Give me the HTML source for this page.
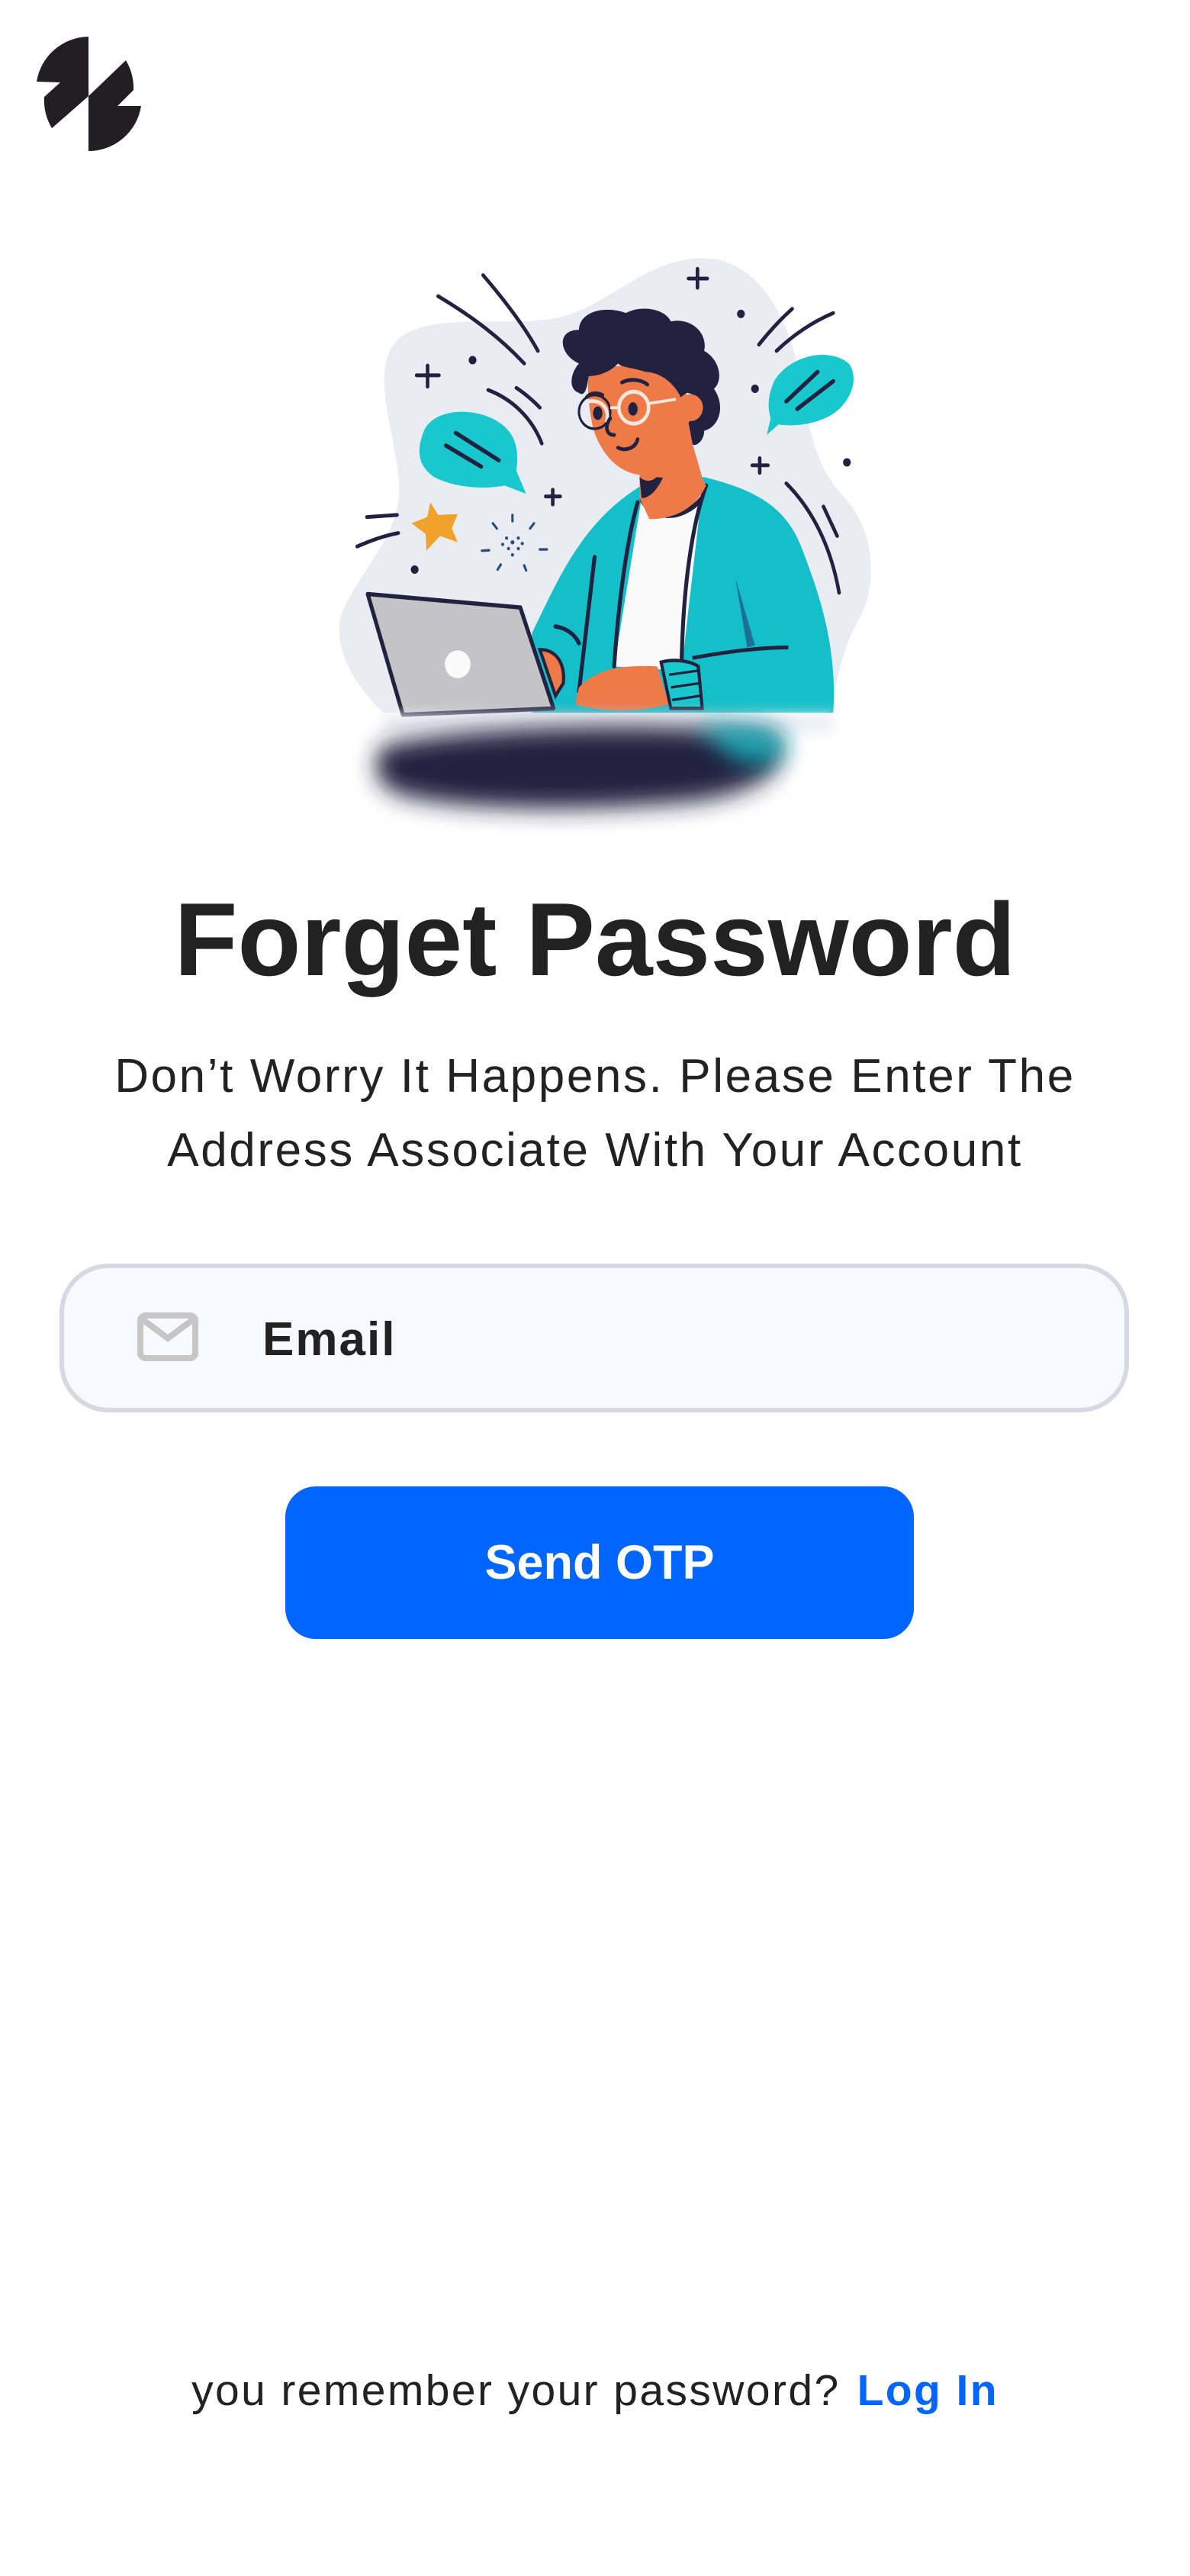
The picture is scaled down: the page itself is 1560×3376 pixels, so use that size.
<!DOCTYPE html>
<html><head><meta charset="utf-8">
<style>
html,body{margin:0;padding:0;background:#fff;}
body{width:1560px;height:3376px;position:relative;overflow:hidden;font-family:"Liberation Sans",sans-serif;color:#222;}
.abs{position:absolute;}
h1{position:absolute;left:0;width:1560px;top:1156px;margin:0;text-align:center;font-size:136px;font-weight:bold;line-height:150px;letter-spacing:0px;color:#222;}
.sub{left:0;width:1560px;top:1362px;text-align:center;font-size:62px;line-height:97px;color:#222;letter-spacing:2.6px;}
.input{left:78px;top:1656px;width:1390px;height:183px;border:6px solid #d6d9e4;border-radius:64px;background:#f6f9fe;}
.email{left:344px;top:1718px;font-size:62px;font-weight:bold;line-height:76px;color:#222;letter-spacing:2px;}
.btn{left:374px;top:1948px;width:824px;height:200px;border-radius:40px;background:#0066ff;color:#fff;font-size:63px;font-weight:bold;text-align:center;line-height:200px;}
.foot{left:0;width:1560px;top:3098px;text-align:center;font-size:57px;line-height:70px;color:#222;letter-spacing:2.4px;}
.foot span{color:#0066ff;font-weight:bold;margin-left:22px;}
</style></head><body>

<svg class="abs" style="left:0;top:0" width="260" height="240" viewBox="0 0 260 240">
<path d="M48,107 A70,70 0 0 1 116,48 L116,126 L68,168 A72,72 0 0 1 58,127 L79,108 Z" fill="#221f24"/>
<path d="M165,79 A72,72 0 0 1 175,118 L154,139 L185,139 A70,70 0 0 1 116,198 L116,126 Z" fill="#221f24"/>
</svg>

<svg class="abs" style="left:400px;top:300px" width="800" height="860" viewBox="0 0 1560 1560" preserveAspectRatio="none">
<defs>
<filter id="bl" x="-30%" y="-50%" width="160%" height="200%"><feGaussianBlur stdDeviation="28"/></filter>
<filter id="bl2" x="-20%" y="-50%" width="140%" height="200%"><feGaussianBlur stdDeviation="14"/></filter>
</defs>
<path d="M240,260 C320,200 500,230 620,215 C760,200 850,80 1000,70 C1150,60 1230,200 1260,330 C1290,480 1300,560 1380,640 C1460,720 1460,850 1420,920 C1370,1000 1360,1080 1340,1150 L200,1150 C120,1080 60,980 100,900 C150,800 250,720 240,600 C230,480 160,330 240,260 Z" fill="#e9ecf3"/>
<path d="M580,960 C640,850 700,700 860,610 L1020,590 C1150,620 1230,660 1270,760 C1320,880 1360,1000 1350,1150 L580,1150 Z" fill="#14bfc9"/>
<path d="M1100,830 L1150,990 L1130,995 Z" fill="#1d6f96"/>
<path d="M860,640 L1015,620 L962,1050 L790,1040 Z" fill="#fafafa"/>
<path d="M860,640 C880,690 960,700 1015,640" stroke="#22213f" stroke-width="12" fill="none"/>
<path d="M850,650 C820,750 800,900 790,1040 M1025,610 C990,700 965,850 962,1050 M740,780 L700,1100 M640,945 C670,950 690,965 700,985" stroke="#22213f" stroke-width="10" fill="none" stroke-linecap="round"/>
<path d="M855,580 L1010,585 L1025,610 C1000,660 950,690 880,690 L855,640 Z" fill="#ee7a48"/>
<path d="M855,590 C880,610 910,600 940,520 C920,600 890,640 860,640 Z" fill="#22213f"/>
<path d="M725,350 C760,320 880,310 960,360 C990,420 1000,470 990,510 L1015,590 C960,600 900,590 860,585 C790,580 750,520 735,470 C725,420 720,380 725,350 Z" fill="#ee7a48"/>
<path d="M700,320 C650,300 640,240 700,240 C700,200 760,180 820,200 C860,180 920,190 935,220 C990,210 1030,250 1020,290 C1060,310 1070,360 1045,380 C1075,420 1060,470 1020,480 C1020,510 990,520 990,510 L980,460 C1010,440 1010,390 975,390 L960,400 C940,360 900,340 870,340 C840,330 810,330 800,320 C780,340 750,350 725,350 C720,380 715,400 700,390 C670,380 680,340 700,320 Z" fill="#22213f"/>
<circle cx="985" cy="425" r="32" fill="#ee7a48"/>
<circle cx="740" cy="435" r="40" fill="none" stroke="#22213f" stroke-width="6"/>
<circle cx="840" cy="425" r="38" fill="none" stroke="#f3e6dc" stroke-width="9"/>
<path d="M725,410 C760,405 780,430 770,460" fill="none" stroke="#f3e6dc" stroke-width="9"/>
<path d="M780,425 L800,425 M878,415 L948,405" stroke="#f3e6dc" stroke-width="7"/>
<ellipse cx="748" cy="438" rx="12" ry="16" fill="#22213f"/><ellipse cx="838" cy="428" rx="12" ry="16" fill="#22213f"/>
<path d="M780,450 C765,470 770,490 790,490 M800,520 C820,530 845,520 850,500 M720,400 C730,390 745,388 760,395 M810,365 C830,355 860,358 875,370" stroke="#22213f" stroke-width="9" fill="none" stroke-linecap="round"/>
<path d="M300,490 C320,420 450,420 510,470 C545,500 545,540 540,575 L565,630 L510,610 C460,620 380,615 330,590 C290,565 285,530 300,490 Z" fill="#19c8cc"/>
<path d="M385,485 L495,550 M360,515 L450,565" stroke="#22213f" stroke-width="10" stroke-linecap="round"/>
<path d="M1200,360 C1240,300 1340,280 1390,320 C1420,360 1390,420 1340,445 C1300,465 1250,470 1210,465 L1180,490 L1190,450 C1180,420 1185,390 1200,360 Z" fill="#19c8cc"/>
<path d="M1230,410 L1310,340 M1258,428 L1350,362" stroke="#22213f" stroke-width="10" stroke-linecap="round"/>
<g stroke="#22213f" stroke-width="9" stroke-linecap="round" fill="none">
<path d="M340,160 C430,210 500,260 560,320"/><path d="M455,110 C510,170 560,230 595,290"/>
<path d="M468,383 C530,405 580,450 605,510"/><path d="M540,378 C560,390 585,410 600,425"/>
<path d="M1160,275 C1190,240 1215,215 1245,190"/><path d="M1205,290 C1250,250 1300,220 1350,200"/>
<path d="M1230,605 C1300,670 1345,760 1365,865"/><path d="M1325,660 L1360,730"/>
<path d="M158,685 L235,680"/><path d="M133,755 C170,740 200,730 238,723"/>
<path d="M313,325 L313,375 M285,348 L342,348"/><path d="M1003,95 L1003,140 M980,118 L1028,118"/>
<path d="M1162,545 L1162,580 M1143,562 L1183,562"/><path d="M633,620 L633,655 M615,636 L652,636"/>
</g>
<g fill="#22213f"><circle cx="428" cy="312" r="10"/><circle cx="1114" cy="202" r="10"/><circle cx="1150" cy="380" r="10"/><circle cx="1385" cy="555" r="10"/><circle cx="280" cy="810" r="10"/></g>
<g stroke="#2a4e7a" stroke-width="6" stroke-linecap="round"><path d="M530,680 L530,695 M480,700 L490,712 M585,700 L575,712 M452,765 L470,764 M600,762 L618,762 M492,810 L500,798 M560,800 L565,812"/></g>
<g fill="#2a4e7a"><circle cx="530" cy="745" r="5"/><circle cx="515" cy="735" r="4"/><circle cx="545" cy="735" r="4"/><circle cx="520" cy="760" r="4"/><circle cx="545" cy="760" r="4"/><circle cx="530" cy="775" r="4"/><circle cx="555" cy="748" r="4"/><circle cx="505" cy="750" r="4"/></g>
<path d="M320,650 L340,680 L390,678 L375,712 L390,745 L345,730 L310,765 L308,725 L272,700 L312,685 Z" fill="#f0a22a"/>
<path d="M160,868 L550,900 L635,1140 L250,1155 Z" fill="#c4c4c6" stroke="#22213f" stroke-width="10" stroke-linejoin="round"/>
<ellipse cx="390" cy="1035" rx="33" ry="33" fill="#fafafa"/>
<path d="M600,1000 C640,1000 665,1030 660,1080 L640,1110 Z" fill="#ee7a48" stroke="#22213f" stroke-width="8"/>
<path d="M700,1090 C740,1050 800,1035 900,1040 L930,1130 C850,1150 760,1150 690,1130 Z" fill="#ee7a48"/>
<path d="M910,1030 C950,1020 990,1030 1005,1040 L1015,1140 L935,1140 Z" fill="#19c8cc" stroke="#22213f" stroke-width="8"/>
<path d="M930,1060 L1005,1050 M935,1090 L1008,1080 M938,1120 L1010,1110" stroke="#22213f" stroke-width="6"/>
<path d="M990,1020 C1080,1005 1160,995 1235,995" stroke="#22213f" stroke-width="9" fill="none"/>
<path d="M200,1150 L1350,1150 L1350,1200 L200,1200 Z" fill="#e9ecf3" filter="url(#bl2)" opacity="0.8"/>
<path d="M200,1230 C400,1180 900,1170 1200,1200 C1240,1260 1210,1330 1000,1360 C700,1390 350,1380 230,1340 C170,1310 170,1260 200,1230 Z" fill="#22213f" filter="url(#bl)"/>
<path d="M1000,1180 C1100,1170 1200,1180 1240,1220 C1230,1270 1150,1280 1100,1260 Z" fill="#14bfc9" filter="url(#bl)" opacity="0.8"/>
</svg>

<h1>Forget Password</h1>
<div class="abs sub">Don’t Worry It Happens. Please Enter The<br>Address Associate With Your Account</div>

<div class="abs input"></div>
<svg class="abs" style="left:170px;top:1710px" width="100" height="90" viewBox="170 1710 100 90">
<rect x="184" y="1724" width="72" height="56" rx="7" fill="none" stroke="#c6c6c6" stroke-width="8"/>
<path d="M188,1730 L220,1754 L252,1730" fill="none" stroke="#c6c6c6" stroke-width="8"/>
</svg>
<div class="abs email">Email</div>

<div class="abs btn">Send OTP</div>

<div class="abs foot">you remember your password?<span>Log In</span></div>
</body></html>
